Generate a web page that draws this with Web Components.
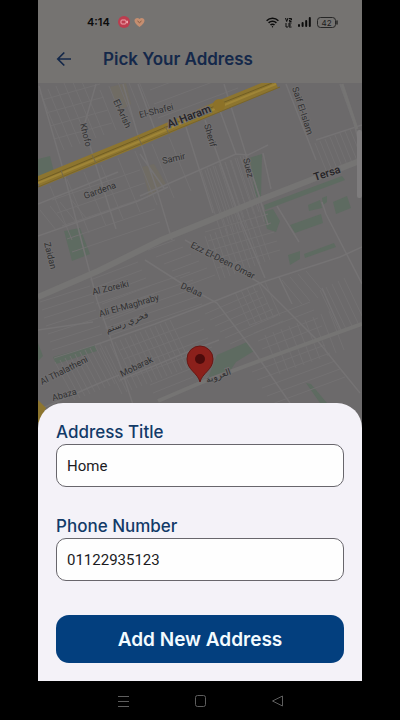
<!DOCTYPE html>
<html lang="en">
<head>
<meta charset="utf-8">
<meta name="viewport" content="width=device-width, initial-scale=1">
<title>Pick Your Address</title>
<style>
  html, body { margin: 0; background: #000; }
  body { font-family: Inter, "Noto Sans", sans-serif; }
</style>
</head>
<body>
<address-screen></address-screen>
<script>
function define(name, html, setup) {
  const template = document.createElement('template');
  template.innerHTML = html;
  customElements.define(name, class extends HTMLElement {
    constructor() {
      super();
      this.attachShadow({ mode: 'open' }).append(template.content.cloneNode(true));
    }
    connectedCallback() { if (setup) setup(this, this.shadowRoot); }
  });
}

define('status-bar', `
<style>
  :host { display: flex; align-items: center; height: 24px; padding: 10px 24px 0 49px; color: #0c0c0c; }
  time { font: 600 11px Inter, sans-serif; margin-right: 8px; }
  svg { display: block; flex: none; }
  .left, .right { display: flex; align-items: center; gap: 4px; }
  .right { margin-left: auto; gap: 6px; }
</style>
<time>4:14</time>
<div class="left">
  <svg width="12" height="12" viewBox="0 0 12 12"><circle cx="6" cy="6" r="6" fill="#bd3c4e"/><rect x="3" y="4" width="5" height="4" rx="1" fill="none" stroke="#efa6ad"/><path d="M8 5.500l2-1v3l-2-1z" fill="#efa6ad"/></svg>
  <svg width="11" height="11" viewBox="0 0 11 11"><path d="M5.500 10C2 7.400.5 5.500.5 3.500.5 1 4 .2 5.500 2 7 .2 10.500 1 10.500 3.500c0 2-1.500 3.900-5 6.500z" fill="#c58e70"/><path d="M3.500 4l2 1.700L7.500 4" fill="none" stroke="#83573f" stroke-width="1"/></svg>
</div>
<div class="right">
  <svg width="13" height="11" viewBox="0 0 13 11" fill="none" stroke="currentColor" stroke-width="1.500"><path d="M.6 3.700a8.500 8.500 0 0 1 11.800 0M2.600 5.900a5.600 5.600 0 0 1 7.800 0M4.500 8a2.800 2.800 0 0 1 4 0"/><circle cx="6.500" cy="9.700" r=".7" fill="currentColor" stroke="none"/></svg>
  <svg width="7" height="11" viewBox="0 0 7 11" fill="none" stroke="currentColor" stroke-width="1"><path d="M.5 1l1.200 3.500L3 1M4 1.500h2.500v1.500H4.500v1.500h2M1 6v4h2M4 6v4M6.500 6H4M6 8H4M6.500 10H4"/></svg>
  <svg width="13" height="10" viewBox="0 0 13 10" fill="currentColor"><rect y="7" width="2" height="3" rx="1"/><rect x="3.600" y="5" width="2" height="5" rx="1"/><rect x="7.200" y="3" width="2" height="7" rx="1"/><rect x="10.800" width="2" height="10" rx="1"/></svg>
  <svg width="21" height="11" viewBox="0 0 21 11" role="img" aria-label="Battery 42 percent"><rect x=".5" y=".5" width="18" height="10" rx="3" fill="none" stroke="#262626"/><path d="M20 4v3" stroke="#262626" stroke-width="1.500" stroke-linecap="round"/><text x="9.500" y="8.500" text-anchor="middle" font-family="Inter, sans-serif" font-size="8" fill="#1c1c1c">42</text></svg>
</div>`);

define('app-bar', `
<style>
  :host { display: flex; align-items: center; height: 49px; padding: 0 16px; gap: 29px; color: #14284a; }
  button { display: grid; place-items: center; width: 20px; height: 24px; padding: 0; border: 0; background: none; color: inherit; }
  h1 { margin: 0; font: 600 17px/24px Inter, sans-serif; white-space: nowrap; }
</style>
<button type="button" aria-label="Back"><svg width="16" height="16" viewBox="0 0 16 16" fill="none" stroke="currentColor" stroke-width="1.700"><path d="M15 8H2M8.300 1.500L1.800 8l6.500 6.500"/></svg></button>
<h1><slot></slot></h1>`);

define('street-map', `
<style>
  :host { display: block; overflow: hidden; background: #6c6a6b; }
  svg { display: block; width: 100%; height: 100%; }
  .fine { stroke: #737172; stroke-width: 1; fill: none; }
  .street { stroke: #757374; stroke-width: 2; fill: none; }
  .main { stroke: #757473; stroke-width: 6; fill: none; }
  .green { fill: #5e6b61; }
  .sand { fill: #706c64; }
  text { font-family: Roboto, "Noto Sans", "DejaVu Sans", sans-serif; font-size: 9px; fill: #302f31; stroke: #716f70; stroke-width: 2px; paint-order: stroke; }
  .big { font-size: 11px; font-weight: 500; fill: #252326; }
</style>
<svg viewBox="38 83 324 598" preserveAspectRatio="xMidYMin slice" role="img" aria-label="Street map">
  <g class="sand">
    <path d="M142 167l12-3 12 20-17 12zM110 87l16-4 5 21-13 8z"/>
  </g>
  <g class="green">
    <path d="M38 159l12-3 4 16-16 7zM64 231l16-3 10 26-18 7zM249 158l13-4-1 43-5 1zM264 205l78-29 3 4-80 30zM263 212l10-3 7 12-4 11-9-3zM290 225l31-11 2 9-28 10zM308 205l12-5 2 8-13 3zM333 202l14-6 4 12-15 6zM322 198l5-2v6l-4 3zM53 357l42-12 2 6-41 13zM38 343l5 13-5 5zM217 355l30-13 7 9-18 11-6 9-22 7zM306 383l5 1 16 19h-7zM288 255l12-4v8l-10 6zM304 254l30-11 2 4-31 11z"/>
  </g>
  <g class="fine" id="fine"></g>
  <g class="street">
    <path d="M39 86l22 76 20 77 16 61 24 68 18 55M96 84l-12 42 10 33 22 70M123 84l14 48 20 58 15 50M140 154l24 34M219 108l17 46 12 1 20-10M140 196l62-27 34-15M155 130l-17-46M205 120l15 42 22 62 23 54M186 127l27 86M224 84l44 141M263 153l8 36M286 84l30 76M340 84l14 39 8 32M316 140l46-15M38 236l40-14 60-21 30-14M38 204l80-32M38 330l55-8M145 260l36 23 36 20 36 47 37 53M185 240l75 43 57 57 43 53M200 307l60-24 80-26 22-10M95 345l60-21 45-17M120 380l65-27 34-13M279 277l13 27M322 288l20 45M277 206l22 36M322 202l4 12 36 70M38 410l57-25 24-10" stroke-width="1.500"/>
  </g>
  <g class="main">
    <path d="M38 297l60-26 63-31 101-41 100-39" />
    <path d="M158 401l42-18 70-26 92-33" stroke-width="4"/>
    <path d="M342 84l15 45" stroke-width="3"/>
  </g>
  <rect x="357" y="130" width="5" height="68" rx="2" fill="#7e7c7d"/>
  <path d="M38 182l100-41 84-36 54-22" fill="none" stroke="#8d752f" stroke-width="11"/>
  <path d="M38 181l100-42 84-36 50-20" fill="none" stroke="#715e24" stroke-width="1"/>
  <path d="M38 187l100-42 62-25 80-33" fill="none" stroke="#79652b" stroke-width="1"/>
  <path d="M38 183l100-41 84-36 54-22" fill="none" stroke="#9f8537" stroke-width="2"/>
  <path d="M92 155l4 8M138 137l4 8M61 170l3 9M165 126l4 8" stroke="#73684a" stroke-width="1"/>
  <circle cx="219" cy="105" r="6" fill="#8d7228"/>
  <path d="M38 400l8 8-8 16z" fill="#8d752f"/>
  <g>
    <text transform="translate(80 124) rotate(76)">Khofo</text>
    <text transform="translate(113 101) rotate(65)">El-Arish</text>
    <text transform="translate(140 118) rotate(-14)">El-Shafei</text>
    <text class="big" transform="translate(169 128) rotate(-21)">Al Haram</text>
    <text transform="translate(163 164) rotate(-13)">Samir</text>
    <text transform="translate(85 199) rotate(-20)">Gardena</text>
    <text transform="translate(204 125) rotate(74)">Sherif</text>
    <text transform="translate(243 159) rotate(76)">Suez</text>
    <text transform="translate(292 88) rotate(72)">Saif El-Islam</text>
    <text class="big" transform="translate(315 181) rotate(-18)">Tersa</text>
    <text transform="translate(44 243) rotate(76)">Zaidan</text>
    <text transform="translate(190 247) rotate(27)">Ezz El-Deen Omar</text>
    <text transform="translate(93 295) rotate(-13)">Al Zoreiki</text>
    <text transform="translate(180 288) rotate(24)">Delaa</text>
    <text transform="translate(100 317) rotate(-16)">Ali El-Maghraby</text>
    <text transform="translate(107 333) rotate(-21)">فخري رستم</text>
    <text transform="translate(42 385) rotate(-27)">Al Thalatheni</text>
    <text transform="translate(122 377) rotate(-26)">Mobarak</text>
    <text transform="translate(53 401) rotate(-16)">Abaza</text>
    <text transform="translate(207 383) rotate(-20)">العروبة</text>
  </g>
  <path d="M200 382c-2-9-13-12-13-23a13 13 0 0 1 26 0c0 11-11 14-13 23z" fill="#8b201b" stroke="#681713"/>
  <circle cx="200" cy="359" r="5" fill="#4c0b0b"/>
</svg>`, (host, root) => {
  // Each block: first line's start and end, step to the next line, number of lines.
  const blocks = [
    [40, 92, 64, 150, 8, -3, 6], [42, 100, 100, 84, 4, 13, 4], [100, 90, 116, 130, 9, -4, 5],
    [50, 186, 72, 240, 17, -7, 8], [52, 200, 140, 170, 5, 13, 5], [205, 170, 224, 226, 5, -2, 9],
    [201, 170, 222, 236, 6, -2, 8], [315, 143, 328, 175, 5, -2, 9], [205, 236, 220, 280, 5, -2, 11],
    [205, 232, 268, 214, 3, 9, 5], [40, 302, 90, 286, 2, 8, 8], [90, 280, 138, 262, 4, 8, 6],
    [96, 304, 190, 272, 3, 8, 5], [100, 348, 122, 394, 5, -2, 15], [55, 362, 75, 400, 5, -2, 10],
    [120, 350, 200, 320, 4, 9, 4], [150, 385, 190, 369, 3, 8, 2], [205, 314, 258, 291, 5, 6, 6],
    [235, 292, 250, 326, 6, -2, 6], [265, 335, 280, 374, 8, -3, 9], [252, 372, 325, 345, 5, 8, 5],
    [320, 290, 340, 332, 6, -3, 5], [148, 250, 175, 240, 8, 7, 6], [40, 210, 56, 230, 10, -4, 4],
    [282, 280, 302, 304, 8, -3, 4], [250, 325, 310, 302, 4, 8, 4], [150, 90, 230, 60, 4, 14, 3]
  ];
  let d = '';
  for (const [x1, y1, x2, y2, dx, dy, n] of blocks)
    for (let i = 0; i < n; i++) d += `M${x1 + i * dx} ${y1 + i * dy}L${x2 + i * dx} ${y2 + i * dy}`;
  root.getElementById('fine').innerHTML = `<path d="${d}"/>`;
});

define('text-field', `
<style>
  :host { display: block; }
  label { display: block; font: 500 17px/24px Inter, sans-serif; color: #123a68; }
  input { display: block; box-sizing: border-box; width: 100%; height: 43px; padding: 0 10px; border: 1px solid #68666c; border-radius: 10px; background: #fefefe; color: #1b1b1e; font: 400 15px Roboto, sans-serif; outline: 0; }
</style>
<label for="field"></label>
<input id="field">`, (host, root) => {
  root.querySelector('label').textContent = host.getAttribute('label');
  const input = root.querySelector('input');
  input.type = host.getAttribute('type') || 'text';
  input.value = host.getAttribute('value') || '';
});

define('primary-button', `
<style>
  :host { display: block; }
  button { display: block; width: 100%; height: 48px; border: 0; border-radius: 13px; background: #033f7e; color: #f3fbff; font: 600 19px Inter, sans-serif; }
</style>
<button type="button"><slot></slot></button>`);

define('bottom-sheet', `
<style>
  :host { display: block; padding: 17px 18px 18px; border-radius: 25px 25px 0 0; background: #f4f2f8; }
  form { display: grid; gap: 27px; margin-bottom: 34px; }
</style>
<form><slot></slot></form>
<slot name="action"></slot>`);

define('system-nav', `
<style>
  :host { display: flex; justify-content: center; align-items: center; gap: 64px; height: 39px; background: #000; }
  button { display: block; padding: 0; border: 0; background: none; color: #5e5e5e; }
  svg { display: block; fill: none; stroke: currentColor; stroke-width: 1; }
</style>
<button type="button" aria-label="Recent apps"><svg width="13" height="12" viewBox="0 0 13 12"><path d="M1 1.500h11M1 6.500h11M1 11.500h11"/></svg></button>
<button type="button" aria-label="Home"><svg width="13" height="12" viewBox="0 0 13 12"><rect x="1.500" y=".5" width="10" height="11" rx="2"/></svg></button>
<button type="button" aria-label="Back"><svg width="13" height="12" viewBox="0 0 13 12"><path d="M11.500 1v10L1.500 6z" stroke-linejoin="round"/></svg></button>`);

define('address-screen', `
<style>
  :host { display: flex; flex-direction: column; min-height: 100vh; padding: 0 38px; }
  header { background: #757371; }
  main { position: relative; flex: 1; display: flex; flex-direction: column; justify-content: flex-end; padding-top: 120px; }
  /* The map lies behind the sheet, so it shows through at the rounded corners. */
  street-map { position: absolute; inset: 0; }
  bottom-sheet { position: relative; }
</style>
<header>
  <status-bar></status-bar>
  <app-bar>Pick Your Address</app-bar>
</header>
<main>
  <street-map></street-map>
  <bottom-sheet>
    <text-field label="Address Title" value="Home"></text-field>
    <text-field label="Phone Number" type="tel" value="01122935123"></text-field>
    <primary-button slot="action">Add New Address</primary-button>
  </bottom-sheet>
</main>
<system-nav></system-nav>`);
</script>
</body>
</html>
